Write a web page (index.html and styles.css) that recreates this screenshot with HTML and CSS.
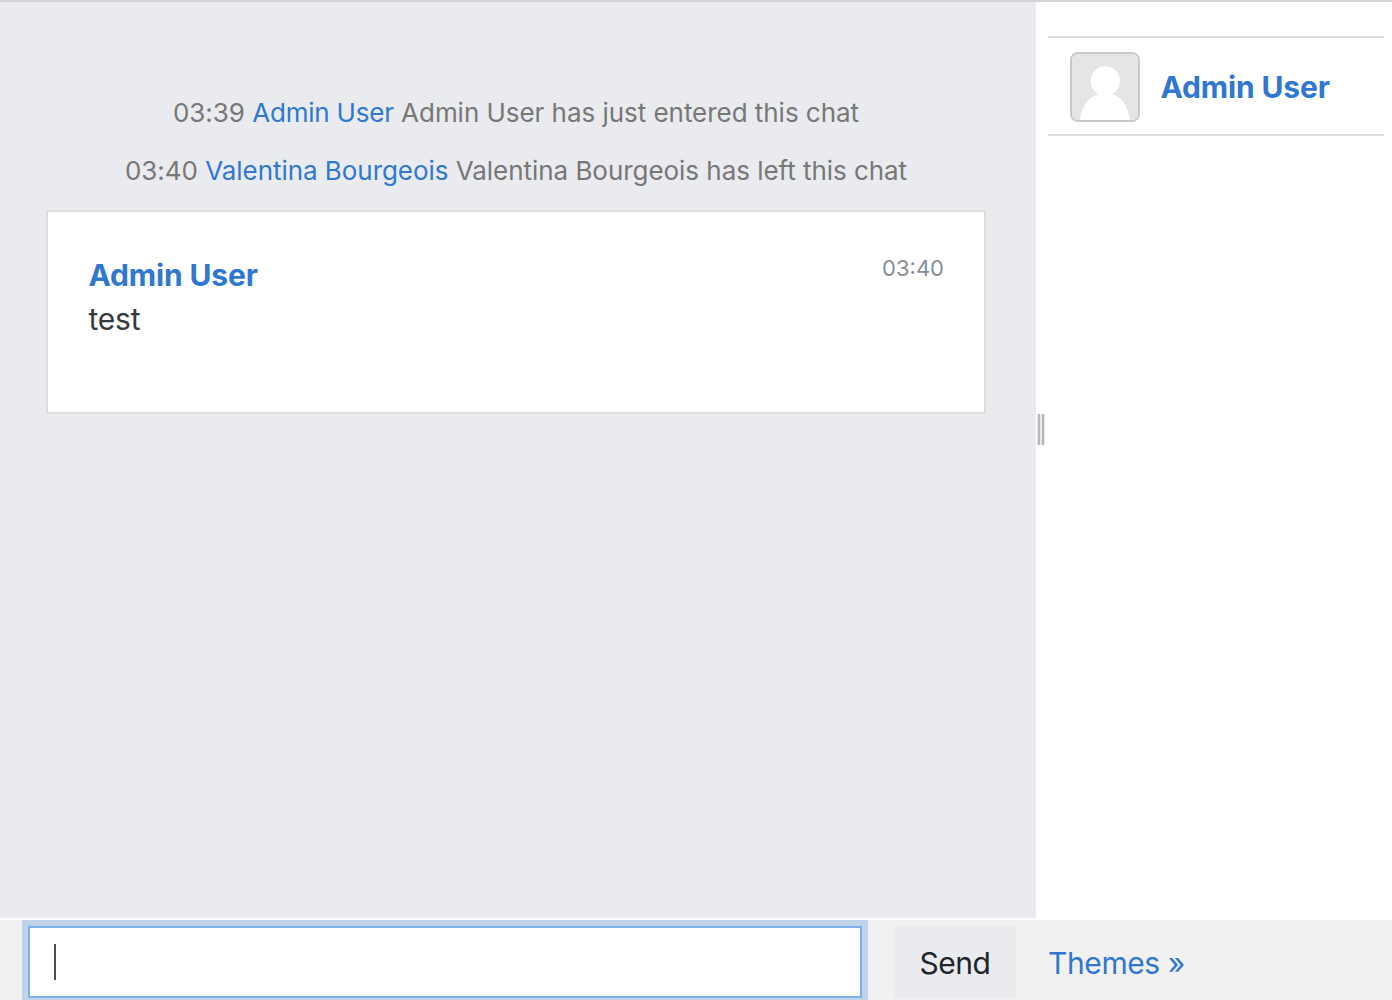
FILE: index.html
```html
<!DOCTYPE html>
<html lang="en">
<head>
<meta charset="utf-8">
<title>Chat</title>
<link rel="stylesheet" href="styles.css">
</head>
<body>
<div class="app">
  <div class="main">
    <main class="chat">
      <p class="event event-enter"><span>03:39</span> <a>Admin User</a> <span>Admin User has just entered this chat</span></p>
      <p class="event event-leave"><span>03:40</span> <a>Valentina Bourgeois</a> <span>Valentina Bourgeois has left this chat</span></p>
      <article class="message">
        <div class="body">
          <a class="name">Admin User</a>
          <span class="text">test</span>
        </div>
        <time class="time">03:40</time>
      </article>
    </main>
    <div class="handle"><i class="grip"></i></div>
    <aside class="users">
      <div class="user">
        <svg class="avatar" viewBox="0 0 66 66">
          <rect width="66" height="66" fill="#e5e5e5"/>
          <path d="M8 66C10 52 17 42 26.500 40.500C21.500 37 18.500 32.500 18.500 27A14.700 14.700 0 0 1 48 27C48 32.500 45 37 40 40.500C49.500 42 56 52 58 66Z" fill="#fff"/>
        </svg>
        <a class="name">Admin User</a>
      </div>
    </aside>
  </div>
  <footer class="bar">
    <div class="input"><i class="caret"></i></div>
    <button class="send"><span>Send</span></button>
    <a class="themes">Themes »</a>
  </footer>
</div>
</body>
</html>
```
FILE: styles.css
```css
* { box-sizing: border-box; }
body {
  margin: 0;
  background: #fff;
  font-family: Inter, "Liberation Sans", sans-serif;
  font-size: 30px;
  color: #373a3c;
}
a { color: #3077cf; }
p { margin: 0; }
.app {
  display: flex;
  flex-direction: column;
  height: 1000px;
  border-top: 2px solid #d4d4d4;
  overflow: hidden;
}
.main {
  display: grid;
  grid-template-columns: 1036px 12px 1fr;
  height: 916px;
  margin-bottom: 2px;
}
.chat {
  background: #eaebef;
  padding: 82px 50px 0 46px;
}
.event {
  height: 58px;
  line-height: 58px;
  font-size: 26px;
  color: #777;
  text-align: center;
  white-space: nowrap;
}
.event-enter { letter-spacing: -0.04px; }
.event-leave { letter-spacing: -0.045px; }
.event-enter a { letter-spacing: -0.2px; }
.message {
  display: flex;
  justify-content: space-between;
  height: 204px;
  margin-top: 10px;
  padding: 41px 40px 0 41px;
  border: 2px solid #dedede;
  background: #fff;
}
.body { display: flex; flex-direction: column; line-height: 44px; }
.name { font-weight: 700; letter-spacing: -0.15px; }
.text { letter-spacing: -0.2px; }
.body .name, .text { margin-left: -0.5px; }
.time {
  font-size: 22px;
  line-height: 30px;
  color: #868e96;
}
.handle { display: flex; align-items: flex-start; padding: 412px 0 0 1px; }
.grip {
  width: 8px;
  height: 31px;
  background: linear-gradient(90deg, #e0e3e0 1px, #b5b7b5 1px 3px, #e8ebe8 3px 5px, #b5b7b5 5px 7px, #e8ebe8 7px);
}
.users { padding: 34px 8px 0 0; }
.user {
  display: flex;
  align-items: center;
  gap: 20.5px;
  height: 100px;
  padding: 2px 0 0 22px;
  border-top: 2px solid #dcdcdc;
  border-bottom: 2px solid #dcdcdc;
}
.avatar {
  width: 70px;
  height: 70px;
  border: 2px solid #c9c9c9;
  border-radius: 8px;
}
.bar {
  display: flex;
  height: 80px;
  padding: 6px 0 0 28px;
  background: #f1f1f1;
}
.input {
  width: 834px;
  height: 72px;
  padding: 16px 24px;
  border: 2px solid #7bb2ed;
  background: #fff;
  box-shadow: 0 0 0 6px #c0d3e9;
}
.caret { display: block; width: 2px; height: 36px; background: #495057; }
.send {
  width: 122px;
  height: 72px;
  margin-left: 32px;
  padding: 2px 0 0;
  border: 0;
  background: #e9ebef;
  color: #212529;
  font: inherit;
  letter-spacing: -0.5px;
}
.themes { margin-left: 32px; line-height: 75px; letter-spacing: -0.4px; }
```
